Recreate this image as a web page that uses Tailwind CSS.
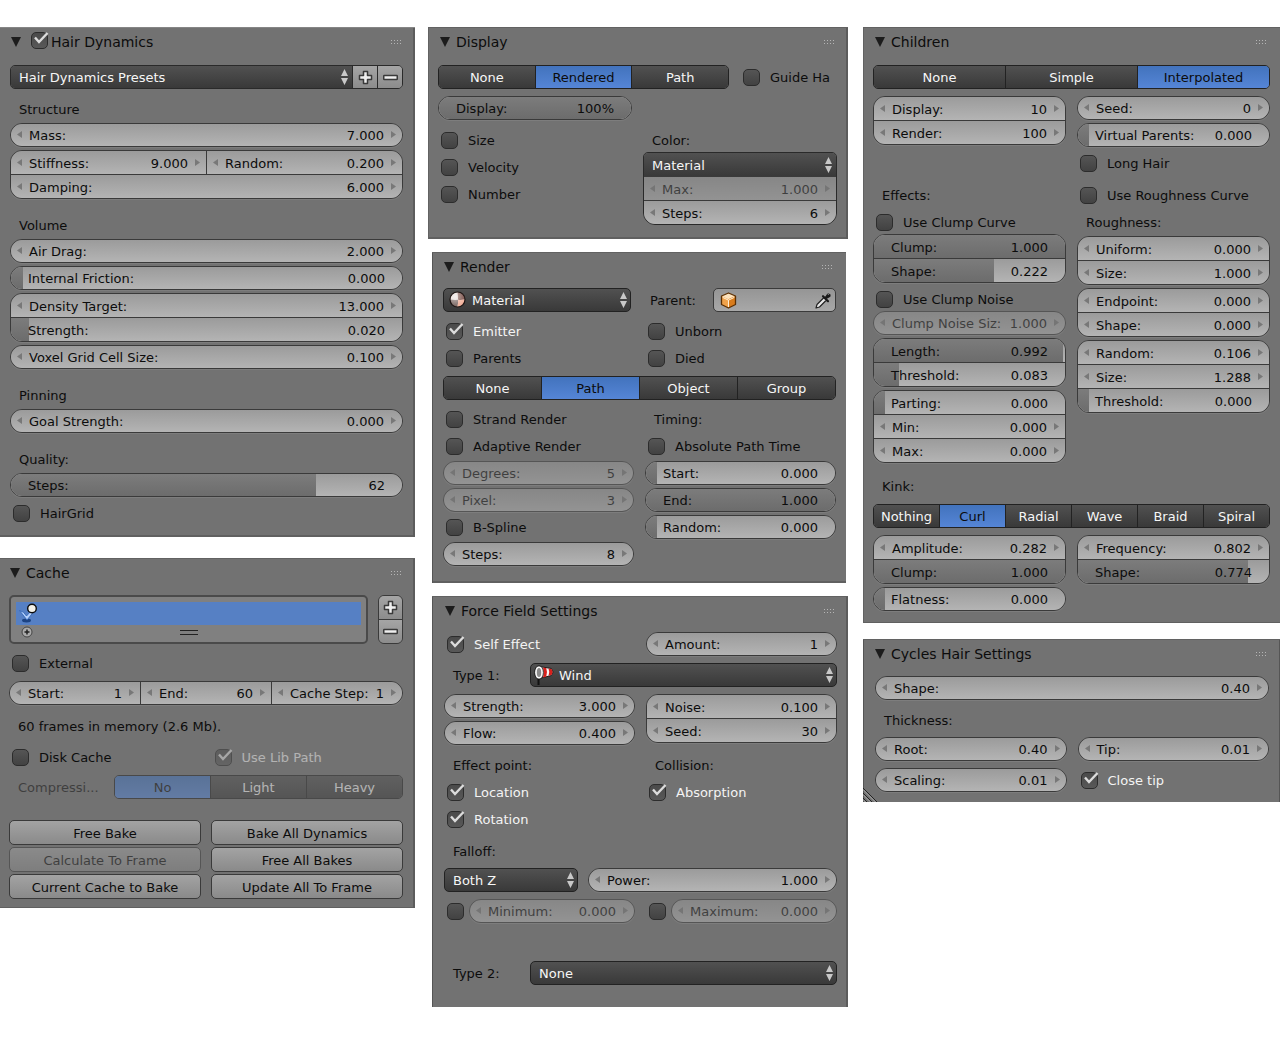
<!DOCTYPE html>
<html lang="en">
<head>
<meta charset="utf-8">
<meta name="viewport" content="width=device-width, initial-scale=1">
<title>Hair particle settings</title>
<script src="https://cdn.jsdelivr.net/npm/@tailwindcss/browser@4"></script>
</head>
<body class="bg-white font-['DejaVu_Sans','Noto_Sans',sans-serif] text-[13px] leading-4 text-[#0c0c0c]">
<main id="app" class="grid min-w-[1200px] grid-cols-[415fr_420fr_419fr] items-start gap-x-[13px] pt-[27px] pb-[30px]"></main>

<script>
// ---------- small icons ----------
const arrowLeft = '<svg class="pointer-events-none absolute left-[6px] top-1/2 -mt-1 h-[7px] w-[5px] fill-[#787878]" viewBox="0 0 5 7"><path d="M5 0v7L0 3.5z"/></svg>';
const arrowRight = '<svg class="pointer-events-none absolute right-[6px] top-1/2 -mt-1 h-[7px] w-[5px] fill-[#787878]" viewBox="0 0 5 7"><path d="M0 0v7l5-3.5z"/></svg>';
const upDown = '<svg class="pointer-events-none absolute right-[4px] top-1/2 -mt-2 h-[16px] w-[7px] fill-[#c8c8c8]" viewBox="0 0 7 16"><path d="M3.500 0L7 7H0zM0 9h7l-3.500 7z"/></svg>';
const plus = '<svg class="h-[15px] w-[15px]" viewBox="0 0 15 15"><path d="M5.500 1.500h4v4h4v4h-4v4h-4v-4h-4v-4h4z" fill="#eee" stroke="#3a3a3a" stroke-width="1.500" stroke-linejoin="round"/></svg>';
const minus = '<svg class="h-[15px] w-[15px]" viewBox="0 0 15 15"><rect x="0.750" y="5.500" width="13.500" height="4" rx="0.500" fill="#eee" stroke="#3a3a3a" stroke-width="1.500"/></svg>';
const sphere = '<svg class="pointer-events-none absolute left-[6px] top-[3px] h-[17px] w-[17px]" viewBox="0 0 17 17"><defs><radialGradient id="sheen" cx=".35" cy=".3" r=".8"><stop offset="0" stop-color="#fff" stop-opacity=".6"/><stop offset="1" stop-color="#fff" stop-opacity="0"/></radialGradient></defs><circle cx="8.500" cy="8.500" r="7.500" fill="#e3d6d2"/><path d="M8.500 1A7.500 7.500 0 0 1 16 8.500Q12 9.300 9 8.800Q9 5 8.500 1z" fill="#6e4038"/><path d="M1 8.500Q5 9.200 9 8.800Q9.300 12 8.500 16A7.500 7.500 0 0 1 1 8.500z" fill="#6b5550"/><path d="M9 8.800Q12 9.300 16 8.500A7.500 7.500 0 0 1 8.500 16Q9.300 12 9 8.800z" fill="#efa890"/><circle cx="8.500" cy="8.500" r="7.500" fill="url(#sheen)" stroke="#1d1412" stroke-width="1.200"/></svg>';
const cube = '<svg class="pointer-events-none absolute left-[6px] top-[3px] h-[17px] w-[17px]" viewBox="0 0 17 17"><path d="M8.500 1L15.500 4v8.500L8.500 16L1.500 12.500V4z" fill="#f0a24a"/><path d="M8.500 1L15.500 4L8.500 7.300L1.500 4z" fill="#fde3bd"/><path d="M15.500 4v8.500L8.500 16V7.300z" fill="#d97c1c"/><path d="M2.500 5.300L8.500 8.200V15M8.500 8.200L14.500 5.300" fill="none" stroke="#fff0d8" stroke-width="1"/><path d="M8.500 1L15.500 4v8.500L8.500 16L1.500 12.500V4z" fill="none" stroke="#5b3005" stroke-width="1.300" stroke-linejoin="round"/></svg>';
const dropper = '<svg class="h-[17px] w-[17px]" viewBox="0 0 17 17"><path d="M1 16l1-3.500L9 5.500l2.500 2.500l-7 7z" fill="#e8e8e8" stroke="#222" stroke-width="1.200" stroke-linejoin="round"/><path d="M8 4.200l5 5M10.500 6l3-3" stroke="#1a1a1a" stroke-width="2.200" stroke-linecap="round"/><path d="M10 5.500l2.300-3.700a2.200 2.200 0 0 1 3 3L11.500 7z" fill="#1a1a1a"/><path d="M13 2.800l.8-.8" stroke="#aaa" stroke-width="1"/></svg>';
const windsock = '<svg class="pointer-events-none absolute left-[4px] top-[2px] h-[20px] w-[20px]" viewBox="0 0 20 20"><path d="M4.500 11v9" stroke="#111" stroke-width="2"/><path d="M5 1.500L17.500 3.500Q20.500 7 17.500 10.500L5 13.500z" fill="#f6f6f6" stroke="#161616"/><path d="M9 2.400l3.200.5q1.600 4 0 8.800L9 12.500q1.400-5 0-10.100zM14.500 3.500l3 .5q2 3 0 6l-3 .8q1.500-4 0-7.300z" fill="#d8201c"/><ellipse cx="5" cy="7.500" rx="3.200" ry="5.500" fill="#8a8a8a" stroke="#f8f8f8" stroke-width="2"/><ellipse cx="5" cy="7.500" rx="4.400" ry="6.700" fill="none" stroke="#111" stroke-width=".8"/></svg>';
const particle = '<svg class="absolute left-[3px] top-[1px] h-[20px] w-[20px]" viewBox="0 0 20 20"><ellipse cx="7.500" cy="17.500" rx="4.500" ry="1.900" fill="#1d4382"/><path d="M.500 7.500l4 1.800L7.500 13L12 8l2.500 1L8 17z" fill="#b4d0fb" stroke="#2f63b5" stroke-width=".8" stroke-linejoin="round"/><circle cx="13" cy="5.500" r="4.300" fill="#f4f2ea" stroke="#0c0c0c" stroke-width="1.400"/></svg>';

// ---------- controls ----------
const off = on => on ? 'opacity-50' : '';

// Number field with step arrows
const num = (name, value, disabled) => `<label class="relative flex h-full min-w-0 flex-1 items-center bg-linear-to-b from-[#9b9b9b] to-[#b4b4b4] px-[18px] ${off(disabled)}">${arrowLeft}<span class="whitespace-nowrap pt-[2px]">${name}</span><input type="text" inputmode="decimal" value="${value}" class="w-full min-w-0 flex-1 bg-transparent pt-[2px] text-right outline-none" ${disabled ? 'disabled' : ''}>${arrowRight}</label>`;

// Slider: the filled part shows the value
const slider = (name, value, fill) => `<label class="relative flex h-full min-w-0 flex-1 items-center justify-between bg-linear-to-b from-[#9b9b9b] to-[#b4b4b4] px-[17px]"><span class="absolute inset-y-0 left-0 bg-linear-to-b from-[#7c7c7c] to-[#6c6c6c]" style="width:${fill}%"></span><span class="relative whitespace-nowrap pt-[2px]">${name}</span><output class="relative pt-[2px]">${value}</output><input type="range" value="${fill}" class="absolute inset-0 h-full w-full appearance-none bg-transparent [&::-webkit-slider-thumb]:appearance-none"></label>`;

// Rounded frame round one row, or several joined rows
const pill = (row, disabled) => `<div class="flex h-6 w-full min-w-0 overflow-hidden rounded-full border ${disabled ? 'border-[#555]' : 'border-[#3a3a3a]'} divide-x divide-[#3a3a3a] shadow-[0_1px_0_#7d7d7d]">${row}</div>`;
const stack = rows => `<div class="w-full divide-y divide-[#3a3a3a] overflow-hidden rounded-xl border border-[#3a3a3a] shadow-[0_1px_0_#7d7d7d]">${rows.map(r => `<div class="box-content flex h-[23px] divide-x divide-[#3a3a3a]">${r}</div>`).join('')}</div>`;

const check = (name, on, disabled) => `<label class="flex h-6 items-center gap-[10px] pl-[3px] ${off(disabled)} ${on ? 'text-[#f4f4f4]' : ''}"><span class="relative h-[17px] w-[17px] shrink-0"><input type="checkbox" aria-label="${name}" ${on ? 'checked' : ''} ${disabled ? 'disabled' : ''} class="peer block h-[17px] w-[17px] appearance-none rounded-[5px] border border-[#2c2c2c] bg-linear-to-b from-[#4a4a4a] to-[#585858] not-checked:from-[#555] not-checked:to-[#424242]"><svg class="pointer-events-none absolute inset-0 hidden h-[17px] w-[17px] overflow-visible peer-checked:block" viewBox="0 0 17 17"><path d="M4 5.500l4 4.500L16.500 1" fill="none" stroke="#dcdcdc" stroke-width="2.400"/></svg></span><span class="whitespace-nowrap pt-[2px]">${name}</span></label>`;

const text = (name, cls = '') => `<div class="flex h-6 items-center whitespace-nowrap pl-[9px] pt-px ${cls}">${name}</div>`;

const menu = (name, value, shape = 'h-6 rounded-[5px] border border-[#222]', icon = '') => `<div class="relative min-w-0 flex-1"><select aria-label="${name}" class="block w-full appearance-none bg-linear-to-b from-[#515151] to-[#393939] pt-[2px] text-[#f6f6f6] ${shape} ${icon ? 'pl-[28px]' : 'pl-[8px]'} pr-4"><option>${value}</option></select>${icon}${upDown}</div>`;

const tabs = (names, active, disabled) => `<div class="flex h-6 flex-1 divide-x divide-[#222] overflow-hidden rounded-[5px] border border-[#222] ${off(disabled)}">${names.map(n => `<button type="button" ${disabled ? 'disabled' : ''} aria-pressed="${n === active}" class="min-w-0 flex-1 basis-0 bg-linear-to-b pt-[2px] text-center ${n === active ? 'from-[#4273bd] to-[#5585d6] text-[#0c0c0c]' : 'from-[#515151] to-[#393939] text-[#f6f6f6]'}">${n}</button>`).join('')}</div>`;

const button = (name, disabled) => `<button type="button" ${disabled ? 'disabled' : ''} class="h-[25px] rounded-[5px] border border-[#3a3a3a] bg-linear-to-b from-[#a3a3a3] to-[#8a8a8a] pt-[2px] text-center ${off(disabled)}">${name}</button>`;

const iconButton = (label, icon, cls) => `<button type="button" aria-label="${label}" class="flex items-center justify-center bg-linear-to-b from-[#a5a5a5] to-[#8c8c8c] ${cls}">${icon}</button>`;

const col = (...items) => `<div class="flex min-w-0 flex-col gap-[3px]">${items.join('')}</div>`;
const two = (left, right, cls = '') => `<div class="grid grid-cols-2 items-start gap-x-[11px] ${cls}">${left}${right}</div>`;
const gap = (cls, body) => `<div class="${cls}">${body}</div>`;

const panel = (title, cls, headPad, body, lead = '') => `<section class="relative bg-[#727272] ${cls}"><header class="flex h-[30px] items-center ${headPad} pr-[14px]"><svg class="h-[10px] w-[10px] shrink-0 fill-[#1c1c1c]" viewBox="0 0 10 10"><path d="M0 0h10L5 10z"/></svg>${lead}<h2 class="flex-1 ${lead ? 'pl-[3px]' : 'pl-[6px]'} text-[14px]">${title}</h2><svg class="h-[4px] w-[10px] fill-[#b5b5b5]" viewBox="0 0 10 4"><path d="M0 0h1v1H0zM3 0h1v1H3zM6 0h1v1H6zM9 0h1v1H9zM0 3h1v1H0zM3 3h1v1H3zM6 3h1v1H6zM9 3h1v1H9z"/></svg></header>${body}</section>`;

// ---------- panels ----------
const hairDynamics = panel('Hair Dynamics', 'pb-3 shadow-[inset_0_1px_0_#858585,inset_-2px_0_0_#5c5c5c,inset_0_-2px_0_#606060]', 'pl-[11px]', `<div class="pl-[10px] pr-3 pt-2">
  <div class="flex h-6 divide-x divide-[#2a2a2a] overflow-hidden rounded-[5px] border border-[#2a2a2a]">${menu('Presets', 'Hair Dynamics Presets', 'h-full')}${iconButton('Add preset', plus, 'w-[25px]')}${iconButton('Remove preset', minus, 'w-[24px]')}</div>
  ${gap('pt-2 pb-[2px]', text('Structure'))}
  ${col(pill(num('Mass:', '7.000')), stack([num('Stiffness:', '9.000') + num('Random:', '0.200'), num('Damping:', '6.000')]))}
  ${gap('pt-[14px] pb-[2px]', text('Volume'))}
  ${col(pill(num('Air Drag:', '2.000')), pill(slider('Internal Friction:', '0.000', 3)), stack([num('Density Target:', '13.000'), slider('Strength:', '0.020', 4.5)]), pill(num('Voxel Grid Cell Size:', '0.100')))}
  ${gap('pt-[14px] pb-[2px]', text('Pinning'))}
  ${pill(num('Goal Strength:', '0.000'))}
  ${gap('pt-[14px] pb-[2px]', text('Quality:'))}
  ${pill(slider('Steps:', '62', 78))}
  ${gap('pt-[4px]', check('HairGrid'))}
</div>`, '<span class="-mt-1 pl-[10px]"><span class="relative block h-[17px] w-[17px]"><input type="checkbox" aria-label="Hair Dynamics" checked class="block h-[17px] w-[17px] appearance-none rounded-[5px] border border-[#2c2c2c] bg-linear-to-b from-[#4a4a4a] to-[#585858]"><svg class="pointer-events-none absolute inset-0 h-[17px] w-[17px] overflow-visible" viewBox="0 0 17 17"><path d="M4 5.500l4 4.500L16.500 1" fill="none" stroke="#dcdcdc" stroke-width="2.400"/></svg></span></span>');

const cache = panel('Cache', 'pb-[9px] shadow-[inset_0_1px_0_#626262,inset_-2px_0_0_#5c5c5c,inset_0_-1px_0_#606060]', 'pl-[10px]', `<div class="pl-[9px] pr-3 pt-[7px]">
  <div class="flex items-stretch gap-[10px]">
    <div class="h-[49px] flex-1 rounded-[5px] border-2 border-[#4a4a4a] bg-[#808080] px-[5px] pt-[5px]">
      <div role="listbox" aria-label="Point caches"><div role="option" aria-selected="true" class="relative h-[23px] bg-[#5680c4]">${particle}</div></div>
      <div class="relative flex h-[14px] items-center justify-center">
        <svg class="absolute left-[5px] top-px h-3 w-3" viewBox="0 0 12 12"><circle cx="6" cy="6" r="5" fill="#aaa" stroke="#444"/><path d="M6 3.500v5M3.500 6h5" stroke="#222" stroke-width="1.500"/></svg>
        <span class="h-[5px] w-[18px] border-y border-[#222]"></span>
      </div>
    </div>
    <div class="flex w-[25px] flex-col divide-y divide-[#3a3a3a] overflow-hidden rounded-[6px] border border-[#3a3a3a]">${iconButton('Add cache', plus, 'flex-1')}${iconButton('Remove cache', minus, 'flex-1')}</div>
  </div>
  ${gap('pt-[7px] pb-[6px]', check('External'))}
  ${pill(num('Start:', '1') + num('End:', '60') + num('Cache Step:', '1'))}
  ${gap('pt-[9px] pb-[7px]', text('60 frames in memory (2.6 Mb).'))}
  ${two(check('Disk Cache'), check('Use Lib Path', true, true))}
  <div class="flex pt-[6px]">${text('Compressi...', 'w-[105px] shrink-0 opacity-50')}${tabs(['No', 'Light', 'Heavy'], 'No', true)}</div>
  <div class="grid grid-cols-2 gap-x-[10px] gap-y-[2px] pt-[21px]">${button('Free Bake')}${button('Bake All Dynamics')}${button('Calculate To Frame', true)}${button('Free All Bakes')}${button('Current Cache to Bake')}${button('Update All To Frame')}</div>
</div>`);

const display = panel('Display', 'pb-[14px] shadow-[inset_0_1px_0_#626262,inset_-2px_0_0_#5c5c5c,inset_1px_0_0_#626262,inset_0_-2px_0_#606060]', 'pl-3', `<div class="pl-[10px] pr-[11px] pt-2">
  <div class="flex items-center gap-[11px]">${tabs(['None', 'Rendered', 'Path'], 'Rendered')}<div class="w-[97px] overflow-hidden">${check('Guide Ha')}</div></div>
  ${two(pill(slider('Display:', '100%', 100)), '', 'pt-[7px]')}
  ${two(col(check('Size'), check('Velocity'), check('Number')), `<div>${text('Color:')}<div class="w-full divide-y divide-[#3a3a3a] overflow-hidden rounded-t-[5px] rounded-b-xl border border-[#2a2a2a]">${menu('Color', 'Material', 'h-[23px]')}<div class="box-content flex h-[23px]">${num('Max:', '1.000', true)}</div><div class="box-content flex h-[23px]">${num('Steps:', '6')}</div></div></div>`, 'pt-2')}
</div>`);

const render = panel('Render', 'ml-1 mr-[2px] pb-[17px] shadow-[inset_0_1px_0_#626262,inset_1px_0_0_#555,inset_0_-2px_0_#606060]', 'pl-3', `<div class="pl-[11px] pr-[10px] pt-[6px]">
  <div class="flex items-center"><div class="flex w-[188px]">${menu('Render material', 'Material', 'h-6 rounded-[5px] border border-[#222]', sphere)}</div>
    <div class="flex flex-1 items-center pl-[19px]"><label for="parent" class="w-[63px] pt-[2px]">Parent:</label><span class="relative flex h-6 flex-1 items-center rounded-[5px] border border-[#3a3a3a] bg-linear-to-b from-[#959595] to-[#a8a8a8]">${cube}<input id="parent" type="text" class="h-full w-full min-w-0 bg-transparent pl-7 outline-none"><button type="button" aria-label="Pick parent object" class="pr-[3px]">${dropper}</button></span></div></div>
  ${two(col(check('Emitter', true), check('Parents')), col(check('Unborn'), check('Died')), 'pt-[7px] pb-[6px]')}
  <div class="flex">${tabs(['None', 'Path', 'Object', 'Group'], 'Path')}</div>
  ${two(col(check('Strand Render'), check('Adaptive Render'), pill(num('Degrees:', '5', true), true), pill(num('Pixel:', '3', true), true), check('B-Spline'), pill(num('Steps:', '8'))), col(text('Timing:'), check('Absolute Path Time'), pill(slider('Start:', '0.000', 6)), pill(slider('End:', '1.000', 100)), pill(slider('Random:', '0.000', 6))), 'pt-[7px]')}
</div>`);

const optional = (name, value) => `<div class="flex items-center gap-[5px] pl-[3px]"><input type="checkbox" aria-label="Use ${name}" class="h-[17px] w-[17px] shrink-0 appearance-none rounded-[5px] border border-[#2c2c2c] bg-linear-to-b from-[#555] to-[#424242]">${pill(num(name, value, true), true)}</div>`;

const force = panel('Force Field Settings', 'ml-1 pb-[22px] shadow-[inset_0_1px_0_#626262,inset_1px_0_0_#555,inset_-2px_0_0_#5c5c5c]', 'pl-[13px]', `<div class="pl-3 pr-[11px] pt-[6px]">
  ${two(check('Self Effect', true), pill(num('Amount:', '1')))}
  <div class="flex pt-[7px]">${text('Type 1:', 'w-[86px]')}${menu('Type 1', 'Wind', 'h-6 rounded-[5px] border border-[#222]', windsock)}</div>
  ${two(col(pill(num('Strength:', '3.000')), pill(num('Flow:', '0.400'))), stack([num('Noise:', '0.100'), num('Seed:', '30')]), 'pt-[7px]')}
  ${two(col(text('Effect point:'), check('Location', true), check('Rotation', true)), col(text('Collision:'), check('Absorption', true)), 'pt-2')}
  ${gap('pt-2 pb-[5px]', text('Falloff:'))}
  <div class="flex gap-[10px]"><div class="flex w-[134px]">${menu('Falloff shape', 'Both Z')}</div><div class="flex-1">${pill(num('Power:', '1.000'))}</div></div>
  ${two(optional('Minimum:', '0.000'), optional('Maximum:', '0.000'), 'pt-[7px]')}
  <div class="flex pt-[38px]">${text('Type 2:', 'w-[86px]')}${menu('Type 2', 'None')}</div>
</div>`);

const children = panel('Children', 'pb-3 shadow-[inset_0_1px_0_#626262,inset_1px_0_0_#626262,inset_0_-1px_0_#606060]', 'pl-3', `<div class="px-[10px] pt-2">
  <div class="flex">${tabs(['None', 'Simple', 'Interpolated'], 'Interpolated')}</div>
  ${two(`<div>${stack([num('Display:', '10'), num('Render:', '100')])}
    ${gap('pt-[38px] pb-[3px]', text('Effects:'))}
    ${check('Use Clump Curve')}
    ${stack([slider('Clump:', '1.000', 100), slider('Shape:', '0.222', 63)])}
    ${gap('pt-[4px]', check('Use Clump Noise'))}
    ${col(pill(num('Clump Noise Siz:', '1.000', true), true), stack([slider('Length:', '0.992', 99), slider('Threshold:', '0.083', 13)]), stack([slider('Parting:', '0.000', 6), num('Min:', '0.000'), num('Max:', '0.000')]))}</div>`,
  `<div>${col(pill(num('Seed:', '0')), pill(slider('Virtual Parents:', '0.000', 6)))}
    ${gap('pt-[4px] pb-2', check('Long Hair'))}
    ${gap('pb-[3px]', check('Use Roughness Curve'))}
    ${gap('pb-[2px]', text('Roughness:'))}
    ${col(stack([num('Uniform:', '0.000'), num('Size:', '1.000')]), stack([num('Endpoint:', '0.000'), num('Shape:', '0.000')]), stack([num('Random:', '0.106'), num('Size:', '1.288'), slider('Threshold:', '0.000', 6)]))}</div>`, 'pt-[7px]')}
  ${gap('pt-[11px] pb-[6px]', text('Kink:'))}
  <div class="flex">${tabs(['Nothing', 'Curl', 'Radial', 'Wave', 'Braid', 'Spiral'], 'Curl')}</div>
  ${two(col(stack([num('Amplitude:', '0.282'), slider('Clump:', '1.000', 100)]), pill(slider('Flatness:', '0.000', 6))), stack([num('Frequency:', '0.802'), slider('Shape:', '0.774', 89)]), 'pt-[7px]')}
</div>`);

const cycles = panel('Cycles Hair Settings', 'pb-[10px] shadow-[inset_0_1px_0_#626262,inset_1px_0_0_#555,inset_-1px_0_0_#555]', 'pl-3', `<div class="pl-3 pr-[11px] pt-[7px]">
  ${pill(num('Shape:', '0.40'))}
  ${gap('pt-[8px] pb-[5px]', text('Thickness:'))}
  ${two(pill(num('Root:', '0.40')), pill(num('Tip:', '0.01')))}
  ${two(pill(num('Scaling:', '0.01')), check('Close tip', true), 'pt-[7px]')}
</div><svg class="absolute bottom-0 left-0 h-[15px] w-[15px]" viewBox="0 0 15 15" fill="none"><path d="M0 1l14 14M0 6l9 9M0 11l4 4" stroke="#222"/><path d="M0 2.500L12.500 15M0 7.500L7.500 15M0 12.500L2.500 15" stroke="#aaa"/></svg>`);

document.getElementById('app').innerHTML = `
  <div class="flex flex-col gap-[21px]">${hairDynamics}${cache}</div>
  <div class="flex flex-col gap-[13px]">${display}${render}${force}</div>
  <div class="flex flex-col gap-4 pl-[2px]">${children}${cycles}</div>`;
</script>
</body>
</html>
